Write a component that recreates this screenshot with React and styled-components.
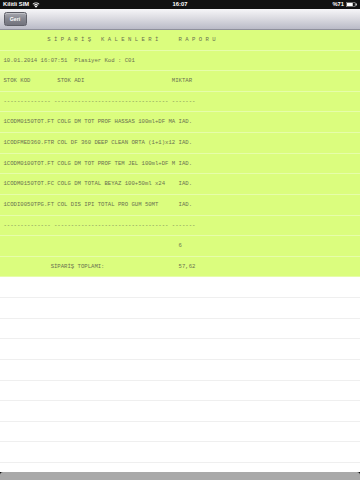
import React from "react";
import styled, { createGlobalStyle } from "styled-components";

const ROW_H = 20.625;

const GlobalStyle = createGlobalStyle`
  html, body {
    margin: 0;
    padding: 0;
    background: #000;
  }
  body {
    width: 360px;
    height: 480px;
    overflow: hidden;
    font-family: "Liberation Sans", Arial, sans-serif;
  }
`;

const reportLines = [
  "             S İ P A R İ Ş   K A L E N L E R İ      R A P O R U",
  "10.01.2014 16:07:51  Plasiyer Kod : C01",
  "STOK KOD        STOK ADI                          MIKTAR",
  "-------------- ---------------------------------- -------",
  "1CODM0150TOT.FT COLG DM TOT PROF HASSAS 100ml+DF MA IAD.",
  "1CODFMED360.FTR COL DF 360 DEEP CLEAN ORTA (1+1)x12 IAD.",
  "1CODM0100TOT.FT COLG DM TOT PROF TEM JEL 100ml+DF M IAD.",
  "1CODM0150TOT.FC COLG DM TOTAL BEYAZ 100+50ml x24    IAD.",
  "1CODI0050TPG.FT COL DIS IPI TOTAL PRO GUM 50MT      IAD.",
  "-------------- ---------------------------------- -------",
  "                                                    6",
  "              SİPARİŞ TOPLAMI:                      57,62",
];

const EMPTY_ROWS = 10;

const App = () => {
  return (
    <Page>
      <GlobalStyle />
      <StatusBar>
        <Carrier>
          Kilitli SIM
          <svg width="8" height="6" viewBox="0 0 16 12">
            <path d="M8 11.5 L5.2 8.4 A4 4 0 0 1 10.8 8.4 Z" fill="#fff" />
            <path d="M3.4 6.4 A6.6 6.6 0 0 1 12.6 6.4 L11.4 7.6 A5 5 0 0 0 4.6 7.6 Z" fill="#fff" />
            <path d="M1 4 A10 10 0 0 1 15 4 L13.8 5.2 A8.3 8.3 0 0 0 2.2 5.2 Z" fill="#fff" />
          </svg>
        </Carrier>
        <Clock>16:07</Clock>
        <Battery>
          %71
          <svg width="11" height="5" viewBox="0 0 22 10">
            <rect x="0.5" y="0.5" width="18" height="9" rx="1.5" fill="none" stroke="#fff" />
            <rect x="2" y="2" width="11.5" height="6" fill="#fff" />
            <rect x="19.5" y="3" width="2" height="4" fill="#fff" />
          </svg>
        </Battery>
      </StatusBar>
      <NavBar>
        <BackButton>Geri</BackButton>
      </NavBar>
      <List>
        {reportLines.map((line, i) => (
          <Row key={i} $filled>
            <Line>{line}</Line>
          </Row>
        ))}
        {Array.from({ length: EMPTY_ROWS }).map((_, i) => (
          <Row key={"e" + i} />
        ))}
      </List>
      <BottomEdge />
    </Page>
  );
};

export default App;

const Page = styled.div`
  width: 360px;
  height: 480px;
  display: flex;
  flex-direction: column;
  background: #000;
  overflow: hidden;
`;

const StatusBar = styled.div`
  height: 9.4px;
  flex: none;
  background: #111;
  color: #fff;
  display: grid;
  grid-template-columns: 1fr auto 1fr;
  align-items: center;
  padding: 0 3px;
  font-size: 5.8px;
  font-weight: bold;
  line-height: 1;
`;

const Carrier = styled.div`
  display: flex;
  align-items: center;
  gap: 3px;
`;

const Clock = styled.div`
  text-align: center;
`;

const Battery = styled.div`
  display: flex;
  align-items: center;
  justify-content: flex-end;
  gap: 2px;
`;

const NavBar = styled.div`
  height: 20.6px;
  flex: none;
  box-sizing: border-box;
  display: flex;
  align-items: center;
  padding: 0 4px 0 3.5px;
  background: linear-gradient(to bottom, #f6f6f8 0%, #dcdce2 45%, #babbc7 100%);
  border-bottom: 1px solid #8f909c;
`;

const BackButton = styled.button`
  height: 13.5px;
  width: 23px;
  padding: 0;
  border: 1px solid #5e5f68;
  border-radius: 2.5px;
  background: linear-gradient(to bottom, #a7a8b0 0%, #85868f 50%, #72737d 100%);
  color: #fff;
  font-family: "Liberation Sans", Arial, sans-serif;
  font-size: 5.2px;
  font-weight: bold;
  box-shadow: inset 0 1px 0 rgba(255, 255, 255, 0.3);
`;

const List = styled.div`
  flex: 1;
  overflow: hidden;
  background: #fff;
`;

const Row = styled.div`
  height: ${ROW_H}px;
  box-sizing: border-box;
  display: flex;
  align-items: center;
  padding-left: 3.5px;
  background: ${(p) => (p.$filled ? "#dbfd7e" : "#fff")};
  border-bottom: 1px solid ${(p) => (p.$filled ? "#e6fdaa" : "#efefef")};
`;

const Line = styled.span`
  font-family: "Liberation Mono", "Courier New", monospace;
  font-size: 5.625px;
  line-height: 1;
  white-space: pre;
  color: #6a7150;
`;

const BottomEdge = styled.div`
  height: 8.3px;
  flex: none;
  background: #a9a9a9;
  border-radius: 3px 3px 0 0;
`;
